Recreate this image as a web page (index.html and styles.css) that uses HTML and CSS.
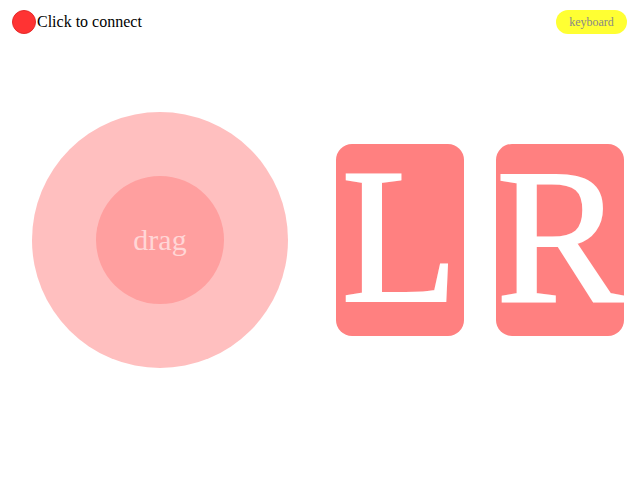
FILE: index.html
```html
<!DOCTYPE html>
<html>
<head>
<meta charset="utf-8">
<link rel="stylesheet" href="styles.css">
</head>
<body>
<div class="page">
  <header class="topbar">
    <div class="status">
      <span class="dot"></span>
      <span class="status-text">Click to connect</span>
    </div>
    <button class="kbd-btn">keyboard</button>
  </header>
  <main class="controls">
    <div class="stick">
      <div class="knob">drag</div>
    </div>
    <div class="buttons">
      <div class="pad"><span class="pad-label">L</span></div>
      <div class="pad"><span class="pad-label">R</span></div>
    </div>
  </main>
</div>
</body>
</html>
```

FILE: styles.css
```css
html, body {
  margin: 0;
  padding: 0;
  background: #ffffff;
}
body {
  font-family: "Liberation Serif", "Times New Roman", serif;
}
.page {
  width: 640px;
  height: 480px;
  display: flex;
  flex-direction: column;
}
.topbar {
  height: 44px;
  box-sizing: border-box;
  padding: 10px 13px 10px 12px;
  display: flex;
  align-items: center;
  justify-content: space-between;
}
.status {
  display: flex;
  align-items: center;
}
.dot {
  width: 24px;
  height: 24px;
  box-sizing: border-box;
  border-radius: 50%;
  background: #ff3333;
  border: 1px solid #e52a2a;
}
.status-text {
  font-size: 16px;
  color: #000;
  margin-left: 1px;
}
.kbd-btn {
  width: 71px;
  height: 24px;
  border: none;
  border-radius: 12px;
  background: #ffff33;
  color: #888888;
  font-family: "Liberation Serif", "Times New Roman", serif;
  font-size: 12px;
  padding: 0;
}
.controls {
  height: 392px;
  display: flex;
  align-items: center;
  padding-left: 32px;
}
.stick {
  width: 256px;
  height: 256px;
  border-radius: 50%;
  background: #ffbfbf;
  display: flex;
  align-items: center;
  justify-content: center;
}
.knob {
  width: 128px;
  height: 128px;
  border-radius: 50%;
  background: #ff9f9f;
  display: flex;
  align-items: center;
  justify-content: center;
  color: #ffd6d6;
  font-size: 30px;
}
.buttons {
  display: flex;
  gap: 32px;
  margin-left: 48px;
}
.pad {
  width: 128px;
  height: 192px;
  box-sizing: border-box;
  padding-bottom: 6px;
  border-radius: 16px;
  background: #ff8080;
  color: #ffffff;
  display: flex;
  align-items: center;
  justify-content: center;
}
.pad-label {
  font-size: 192px;
  line-height: 170px;
  -webkit-text-stroke: 2px #ffffff;
}
```
